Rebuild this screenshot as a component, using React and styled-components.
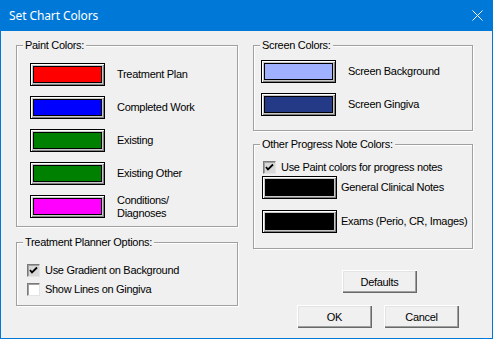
import React from "react";
import styled, { createGlobalStyle } from "styled-components";

const GlobalStyle = createGlobalStyle`
  html, body { margin: 0; padding: 0; background: #f0f0f0; }
  * { box-sizing: border-box; }
`;

const Window = styled.div`
  width: 493px;
  height: 339px;
  border: 1px solid #0078d7;
  background: #0078d7;
  display: flex;
  flex-direction: column;
  font-family: "Liberation Sans", Arial, sans-serif;
  font-size: 11px;
  letter-spacing: -0.3px;
  color: #000;
`;

const TitleBar = styled.div`
  height: 30px;
  flex: none;
  display: flex;
  align-items: center;
  justify-content: space-between;
  padding: 0 9px 1px 8px;
  color: #fff;
`;

const Title = styled.span`
  font-family: "Noto Sans", "Segoe UI", sans-serif;
  font-size: 12px;
  letter-spacing: -0.1px;
`;

const CloseIcon = styled.svg`
  width: 11px;
  height: 11px;
  display: block;
`;

const Body = styled.div`
  flex: 1;
  background: #f0f0f0;
  display: flex;
  align-items: flex-start;
  gap: 15px;
  padding: 14px 0 0 15px;
`;

const Column = styled.div`
  width: ${(p) => p.$w}px;
  display: flex;
  flex-direction: column;
`;

const Group = styled.div`
  position: relative;
  border: 1px solid #a0a0a0;
  box-shadow: 1px 1px 0 #fff, inset 1px 1px 0 #fff;
  margin-top: ${(p) => p.$mt || 0}px;
  padding: ${(p) => p.$pad};
  display: flex;
  flex-direction: column;
  gap: ${(p) => p.$gap || 0}px;
`;

const Legend = styled.span`
  position: absolute;
  top: -8px;
  left: 6px;
  padding: 0 2px;
  line-height: 14px;
  background: #f0f0f0;
  white-space: nowrap;
`;

const Row = styled.div`
  display: flex;
  align-items: center;
  gap: ${(p) => p.$gap}px;
  margin-top: ${(p) => p.$mt || 0}px;
  height: ${(p) => p.$h}px;
`;

const Swatch = styled.div`
  width: 75px;
  height: 23px;
  flex: none;
  border: 1px solid #000;
  padding: 2px;
  background: #c8c8c8;
  box-shadow: inset 1px 1px 0 #fff, inset -1px -1px 0 #808080;
  & > div {
    width: 100%;
    height: 100%;
    border: 1px solid #000;
    background: ${(p) => p.$color};
  }
`;

const Label = styled.span`
  line-height: 13px;
  white-space: nowrap;
`;

const Check = styled.div`
  width: 13px;
  height: 13px;
  flex: none;
  margin-left: ${(p) => p.$ml || 0}px;
  border: 1px solid;
  border-color: #7a7a7a #e3e3e3 #e3e3e3 #7a7a7a;
  box-shadow: inset 1px 1px 0 #a0a0a0;
  background: ${(p) => (p.$checked ? "#d8d8d8" : "#fff")};
  display: flex;
  align-items: center;
  justify-content: center;
`;

const Button = styled.div`
  width: 75px;
  height: 23px;
  display: flex;
  align-items: center;
  justify-content: center;
  background: #f0f0f0;
  box-shadow: inset 1px 1px 0 #fff, inset -1px -1px 0 #696969,
    inset -2px -2px 0 #a0a0a0, inset 2px 2px 0 #e3e3e3;
  margin-left: ${(p) => p.$ml || 0}px;
  margin-top: ${(p) => p.$mt || 0}px;
`;

const ButtonRow = styled.div`
  display: flex;
  gap: 12px;
  margin: ${(p) => p.$mt}px 0 0 ${(p) => p.$ml}px;
`;

const CheckMark = () => (
  <svg width="9" height="9" viewBox="0 0 9 9">
    <path d="M1 4 L3 6.5 L8 1.5" fill="none" stroke="#000" strokeWidth="1.8" />
  </svg>
);

const CheckRow = ({ checked, children, mt, ml }) => (
  <Row $gap={5} $mt={mt} $h={13}>
    <Check $checked={checked} $ml={ml}>
      {checked && <CheckMark />}
    </Check>
    <Label>{children}</Label>
  </Row>
);

const ColorRow = ({ color, gap, mt, children }) => (
  <Row $gap={gap} $mt={mt} $h={23}>
    <Swatch $color={color}>
      <div />
    </Swatch>
    <Label>{children}</Label>
  </Row>
);

export default function App() {
  return (
    <>
      <GlobalStyle />
      <Window>
        <TitleBar>
          <Title>Set Chart Colors</Title>
          <CloseIcon viewBox="0 0 11 11">
            <path d="M0.5 0.5 L10.5 10.5 M10.5 0.5 L0.5 10.5" stroke="#fff" strokeWidth="1" />
          </CloseIcon>
        </TitleBar>
        <Body>
          <Column $w={222}>
            <Group $pad="17px 8px 8px 13px" $gap={10}>
              <Legend>Paint Colors:</Legend>
              <ColorRow color="#ff0000" gap={12}>Treatment Plan</ColorRow>
              <ColorRow color="#0000ff" gap={12}>Completed Work</ColorRow>
              <ColorRow color="#008000" gap={12}>Existing</ColorRow>
              <ColorRow color="#008000" gap={12}>Existing Other</ColorRow>
              <ColorRow color="#ff00ff" gap={12}>
                Conditions/
                <br />
                Diagnoses
              </ColorRow>
            </Group>
            <Group $mt={15} $pad="21px 8px 9px 10px" $gap={6}>
              <Legend>Treatment Planner Options:</Legend>
              <CheckRow checked>Use Gradient on Background</CheckRow>
              <CheckRow>Show Lines on Gingiva</CheckRow>
            </Group>
          </Column>
          <Column $w={220}>
            <Group $pad="14px 8px 14px 7px" $gap={10}>
              <Legend>Screen Colors:</Legend>
              <ColorRow color="#9fb1ff" gap={12}>Screen Background</ColorRow>
              <ColorRow color="#243a86" gap={12}>Screen Gingiva</ColorRow>
            </Group>
            <Group $mt={13} $pad="16px 8px 15px 8px">
              <Legend>Other Progress Note Colors:</Legend>
              <CheckRow checked ml={1}>Use Paint colors for progress notes</CheckRow>
              <ColorRow color="#000" gap={4} mt={2}>General Clinical Notes</ColorRow>
              <ColorRow color="#000" gap={4} mt={11}>Exams (Perio, CR, Images)</ColorRow>
            </Group>
            <Button $ml={89} $mt={21}>Defaults</Button>
            <ButtonRow $mt={12} $ml={44}>
              <Button>OK</Button>
              <Button>Cancel</Button>
            </ButtonRow>
          </Column>
        </Body>
      </Window>
    </>
  );
}
